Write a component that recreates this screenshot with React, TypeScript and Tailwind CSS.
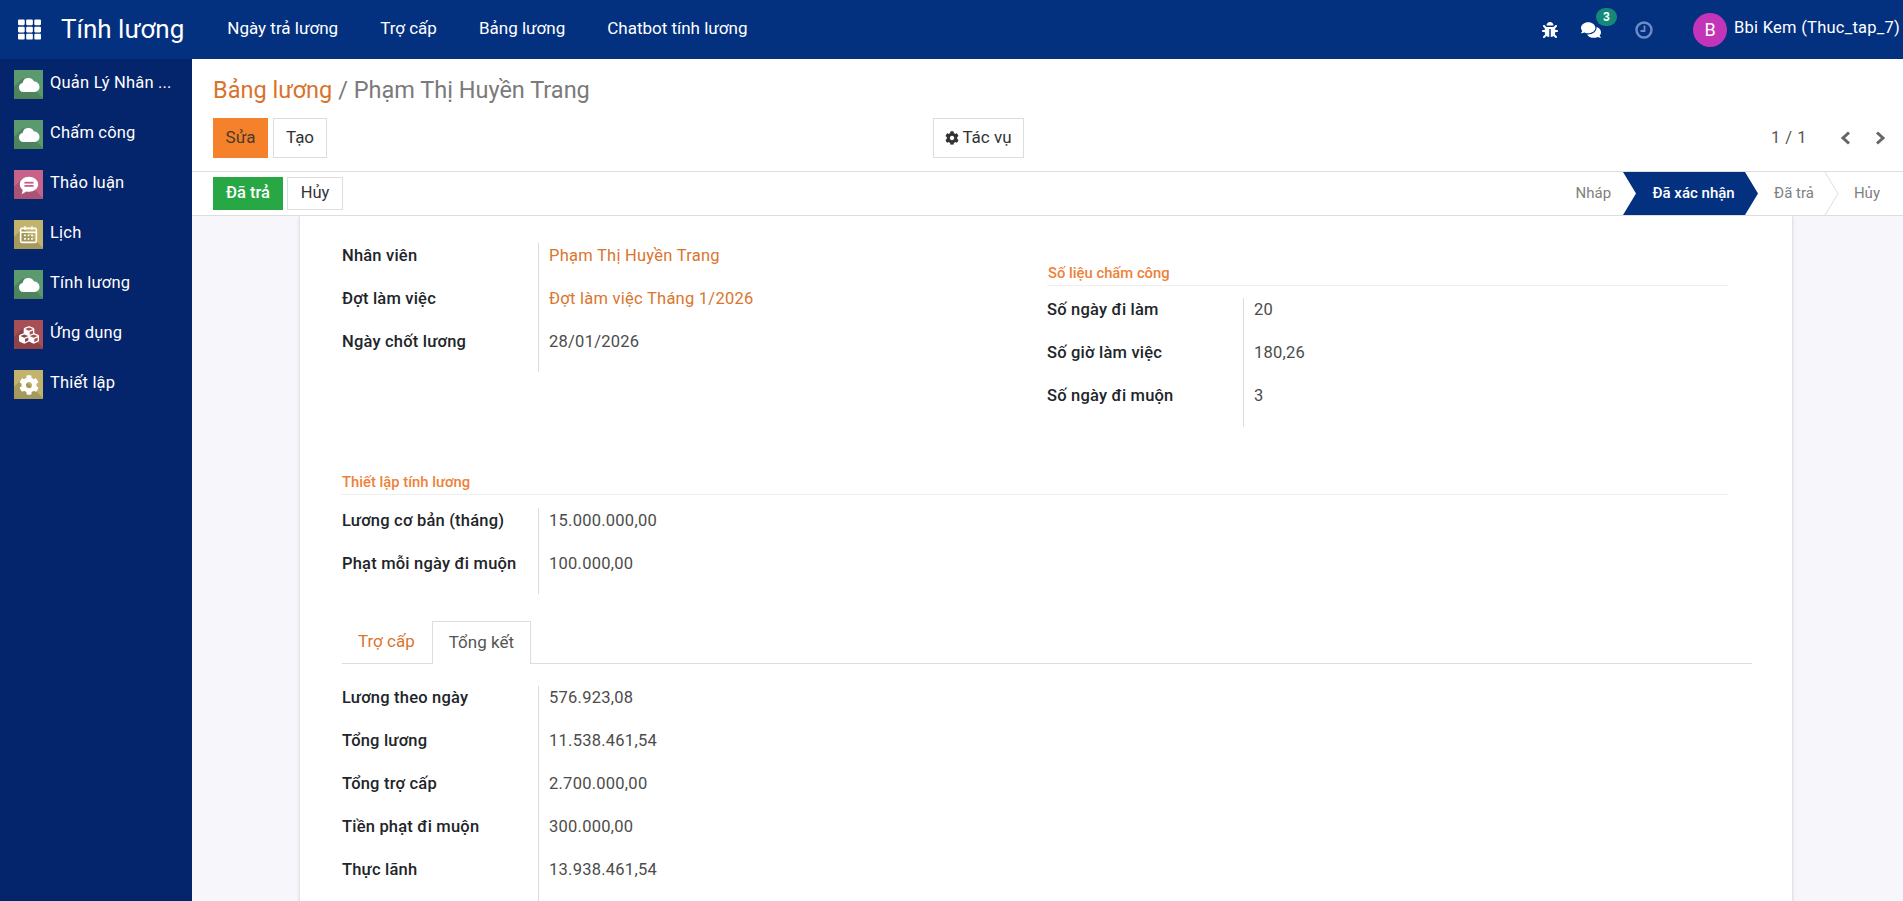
import { FaBug, FaCog, FaComments, FaCubes, FaTh } from 'react-icons/fa';
import { ReactNode } from 'react';

const FONT = "font-['Roboto','Noto_Sans',sans-serif]";

function Cloud() {
  return (
    <svg viewBox="0 0 24 24" className="relative h-[24px] w-[24px]" fill="#ffffff">
      <path d="M6.500 19a4.500 4.500 0 0 1-.9-8.900A6 6 0 0 1 17 8.600a5.200 5.200 0 0 1 .6 10.400z" />
    </svg>
  );
}

function Chat() {
  return (
    <svg viewBox="0 0 24 24" className="relative h-[22px] w-[22px]">
      <path fill="#ffffff" d="M12 3c5.500 0 10 3.600 10 8.200s-4.500 8.200-10 8.200c-1 0-2-.1-2.900-.4L4 22l1.200-4.600C3.200 15.900 2 13.700 2 11.200 2 6.600 6.500 3 12 3z" />
      <rect x="7" y="8.500" width="10" height="2" fill="#c9628a" />
      <rect x="7" y="12" width="10" height="2" fill="#c9628a" />
    </svg>
  );
}

function Calendar() {
  return (
    <svg viewBox="0 0 24 24" className="relative h-[21px] w-[21px]" fill="none" stroke="#ffffff" strokeWidth="1.800">
      <rect x="3" y="5" width="18" height="16" rx="1.500" />
      <path d="M3 9.500h18M8 2.500v4M16 2.500v4" />
      <path d="M7 13h2M11 13h2M15 13h2M7 17h2M11 17h2M15 17h2" strokeWidth="2" />
    </svg>
  );
}

function Chevron({ left }: { left?: boolean }) {
  return (
    <svg viewBox="0 0 11 14" className="h-[14px] w-[11px]" fill="none" stroke="#666666" strokeWidth="3">
      <path d={left ? 'M9 1.500L3 7l6 5.500' : 'M2 1.500L8 7l-6 5.500'} />
    </svg>
  );
}

function ClockIcon() {
  return (
    <svg viewBox="0 0 18 18" className="ml-[34px] h-[18px] w-[18px]" fill="none" stroke="#6f8cc9" strokeWidth="2.400">
      <circle cx="9" cy="9" r="7.500" />
      <path d="M9.500 4.500V10H5.500" strokeWidth="1.800" />
    </svg>
  );
}

const menu = [
  { name: 'Quản Lý Nhân ...', tile: 'bg-[#5b9a6e]', icon: <Cloud /> },
  { name: 'Chấm công', tile: 'bg-[#5b9a6e]', icon: <Cloud /> },
  { name: 'Thảo luận', tile: 'bg-[#c9628a]', icon: <Chat /> },
  { name: 'Lịch', tile: 'bg-[#c2b46c]', icon: <Calendar /> },
  { name: 'Tính lương', tile: 'bg-[#5b9a6e]', icon: <Cloud /> },
  { name: 'Ứng dụng', tile: 'bg-[#a84f55]', icon: <FaCubes className="relative text-[20px] text-white" /> },
  { name: 'Thiết lập', tile: 'bg-[#c2b46c]', icon: <FaCog className="relative text-[20px] text-white" /> },
];

function Tile({ tile, children }: { tile: string; children: ReactNode }) {
  return (
    <div className={`relative flex h-[29px] w-[29px] shrink-0 items-center justify-center overflow-hidden ${tile}`}>
      <div className="absolute top-[15px] left-[-4px] h-[24px] w-[30px] rotate-45 bg-black/15" />
      {children}
    </div>
  );
}

function Row({ label, value, link, shift }: { label: string; value: string; link?: boolean; shift?: boolean }) {
  return (
    <div className="flex h-[43px]">
      <div className={`w-[197px] border-r border-[#dcdcdc] text-[16.5px] leading-[24px] font-medium tracking-[0.2px] text-[#212529] ${shift ? 'pt-[1px]' : ''}`}>
        {label}
      </div>
      <div className={`pl-[10px] text-[16.5px] leading-[24px] tracking-[0.25px] ${shift ? 'pt-[1px]' : ''} ${link ? 'text-[#d9752f]' : 'text-[#4c4c4c]'}`}>
        {value}
      </div>
    </div>
  );
}

function SectionTitle({ children }: { children: ReactNode }) {
  return (
    <div className="h-[23px] border-b border-[#efefef] pl-[1px] text-[14.8px] leading-[20px] font-medium text-[#ee8139]">
      {children}
    </div>
  );
}

export default function App() {
  return (
    <div className={`flex h-[901px] flex-col overflow-hidden bg-white ${FONT}`}>
      <header className="flex h-[59px] shrink-0 items-center bg-[#03307f] text-white">
        <FaTh className="mb-[1px] ml-[18px] text-[23px]" />
        <span className="mb-[2px] ml-[20px] text-[26px] leading-none">Tính lương</span>
        <nav className="mb-[2px] ml-[43px] flex gap-[42px] text-[17px]">
          <span>Ngày trả lương</span>
          <span>Trợ cấp</span>
          <span>Bảng lương</span>
          <span>Chatbot tính lương</span>
        </nav>
        <div className="ml-auto flex items-center">
          <FaBug className="text-[16px]" />
          <div className="relative ml-[23px]">
            <FaComments className="text-[20px]" />
            <span className="absolute top-[-12px] left-[15px] flex h-[18px] w-[21px] items-center justify-center rounded-full bg-[#14897a] text-[12px] font-bold">
              3
            </span>
          </div>
          <ClockIcon />
          <div className="ml-[40px] flex h-[34px] w-[34px] items-center justify-center rounded-full bg-[#c235b8] text-[18px]">
            B
          </div>
          <span className="mr-[3px] mb-[2px] ml-[7px] text-[16.5px] tracking-[0.25px]">Bbi Kem (Thuc_tap_7)</span>
        </div>
      </header>

      <div className="flex min-h-0 flex-1">
        <aside className="w-[192px] shrink-0 bg-[#04246b] pt-[11px] text-white">
          {menu.map((m) => (
            <div key={m.name} className="flex h-[50px] items-start pl-[14px]">
              <Tile tile={m.tile}>{m.icon}</Tile>
              <span className="ml-[7px] pt-[1px] text-[16.5px] leading-[24px] tracking-[0.2px]">{m.name}</span>
            </div>
          ))}
        </aside>

        <main className="flex min-w-0 flex-1 flex-col">
          <div className="h-[113px] shrink-0 border-b border-[#dddddd] pr-[17px] pl-[21px]">
            <div className="pt-[14px] text-[23.5px] leading-[34px] text-[#7a7a7a]">
              <span className="text-[#d9722b]">Bảng lương</span> / Phạm Thị Huyền Trang
            </div>
            <div className="mt-[11px] flex h-[40px] items-center text-[17px]">
              <button type="button" className="h-[40px] w-[55px] bg-[#f5812a] text-[#4a3a2c]">Sửa</button>
              <button type="button" className="ml-[5px] h-[40px] w-[54px] border border-[#dddddd] bg-white text-[#333333]">Tạo</button>
              <button type="button" className="ml-[606px] flex h-[40px] w-[91px] items-center justify-center gap-[3px] border border-[#dddddd] bg-white text-[#333333]">
                <FaCog className="text-[14px]" /> Tác vụ
              </button>
              <span className="ml-auto text-[16.5px] tracking-[0.5px] text-[#555555]">1 / 1</span>
              <div className="ml-[33px] flex gap-[24px]">
                <Chevron left />
                <Chevron />
              </div>
            </div>
          </div>

          <div className="flex h-[44px] shrink-0 items-center border-b border-[#dddddd] pl-[21px]">
            <button type="button" className="h-[33px] w-[70px] bg-[#28a745] text-[16.5px] font-medium text-white">Đã trả</button>
            <button type="button" className="ml-[4px] h-[33px] w-[56px] border border-[#dddddd] bg-white text-[16.5px] text-[#333333]">Hủy</button>
            <div className="ml-auto flex h-full items-center text-[15px] text-[#808080]">
              <span>Nháp</span>
              <div className="relative ml-[12px] flex h-full w-[135px] items-center justify-center pl-[6px] font-medium text-white">
                <svg viewBox="0 0 135 43" preserveAspectRatio="none" className="absolute inset-0 h-full w-full">
                  <polygon points="0,0 122,0 135,21.500 122,43 0,43 13,21.500" fill="#03307f" />
                </svg>
                <span className="relative">Đã xác nhận</span>
              </div>
              <span className="ml-[16px]">Đã trả</span>
              <svg viewBox="0 0 15 43" className="ml-[10px] h-full w-[15px]" fill="none" stroke="#dddddd">
                <path d="M1 0l13 21.500L1 43" />
              </svg>
              <span className="mr-[23px] ml-[15px]">Hủy</span>
            </div>
          </div>

          <div className="min-h-0 flex-1 overflow-hidden bg-[#f7f7fb]">
            <div className="mr-[110px] ml-[107px] min-h-[700px] border-x border-[#e4e4e8] bg-white pt-[27px] pr-[40px] pl-[42px] shadow-sm">
              <div className="flex">
                <div className="w-[705px]">
                  <Row label="Nhân viên" value="Phạm Thị Huyền Trang" link shift />
                  <Row label="Đợt làm việc" value="Đợt làm việc Tháng 1/2026" link shift />
                  <Row label="Ngày chốt lương" value="28/01/2026" shift />
                </div>
                <div className="mr-[24px] flex-1 pt-[20px]">
                  <SectionTitle>Số liệu chấm công</SectionTitle>
                  <div className="mt-[12px]">
                    <Row label="Số ngày đi làm" value="20" />
                    <Row label="Số giờ làm việc" value="180,26" />
                    <Row label="Số ngày đi muộn" value="3" />
                  </div>
                </div>
              </div>

              <div className="mt-[45px] mr-[24px] ml-[-1px]">
                <SectionTitle>Thiết lập tính lương</SectionTitle>
              </div>
              <div className="mt-[13px]">
                <Row label="Lương cơ bản (tháng)" value="15.000.000,00" shift />
                <Row label="Phạt mỗi ngày đi muộn" value="100.000,00" shift />
              </div>

              <div className="mt-[27px] flex h-[43px] border-b border-[#dddddd] text-[17px]">
                <div className="pt-[8px] pr-[17px] pl-[16px] text-[#d9752f]">Trợ cấp</div>
                <div className="h-[43px] border-x border-t border-[#dddddd] bg-white px-[16px] pt-[8px] text-[#555555]">Tổng kết</div>
              </div>
              <div className="mt-[22px]">
                <Row label="Lương theo ngày" value="576.923,08" />
                <Row label="Tổng lương" value="11.538.461,54" />
                <Row label="Tổng trợ cấp" value="2.700.000,00" />
                <Row label="Tiền phạt đi muộn" value="300.000,00" />
                <Row label="Thực lãnh" value="13.938.461,54" />
              </div>
            </div>
          </div>
        </main>
      </div>
    </div>
  );
}
